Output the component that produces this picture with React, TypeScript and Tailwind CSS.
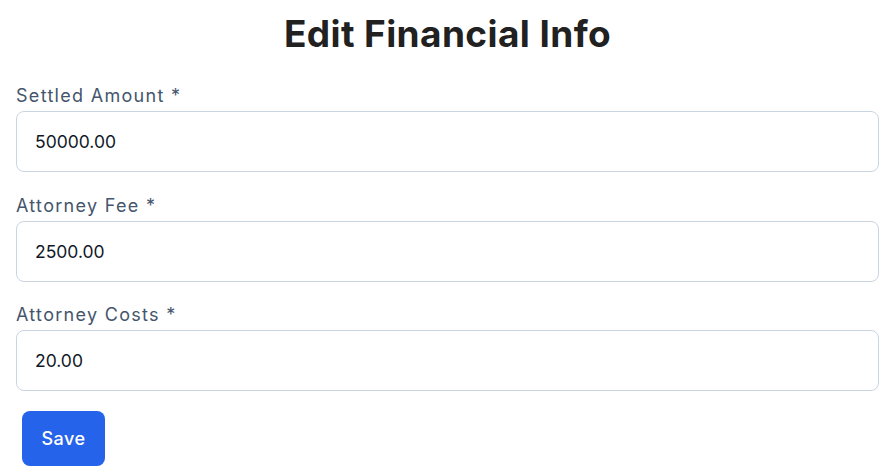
import { useState } from "react";

const fields = [
  { id: "settled", label: "Settled Amount *", value: "50000.00" },
  { id: "fee", label: "Attorney Fee *", value: "2500.00" },
  { id: "costs", label: "Attorney Costs *", value: "20.00" },
];

export default function App() {
  const [values, setValues] = useState<Record<string, string>>(
    Object.fromEntries(fields.map((f) => [f.id, f.value]))
  );

  return (
    <div className="min-h-screen bg-white px-4 pt-[14px] font-['Inter',sans-serif]">
      <h1 className="text-center text-[37px] font-bold leading-10 tracking-[0.4px] text-[#212121]">
        Edit Financial Info
      </h1>
      <form className="mt-[28px]" onSubmit={(e) => e.preventDefault()}>
        {fields.map((f) => (
          <div key={f.id} className="mb-[19.5px]">
            <label
              htmlFor={f.id}
              className="block text-[18px] leading-[28px] tracking-[1.3px] text-slate-600"
            >
              {f.label}
            </label>
            <input
              id={f.id}
              value={values[f.id]}
              onChange={(e) => setValues({ ...values, [f.id]: e.target.value })}
              className="mt-px block h-[61px] w-full rounded-lg border border-slate-300 px-[18px] text-[17.5px] text-gray-900 outline-none"
            />
          </div>
        ))}
        <button
          type="submit"
          className="ml-[6px] h-[55px] w-[83px] rounded-lg bg-[#2563eb] text-[18px] font-medium tracking-[0.5px] text-white"
        >
          Save
        </button>
      </form>
    </div>
  );
}
